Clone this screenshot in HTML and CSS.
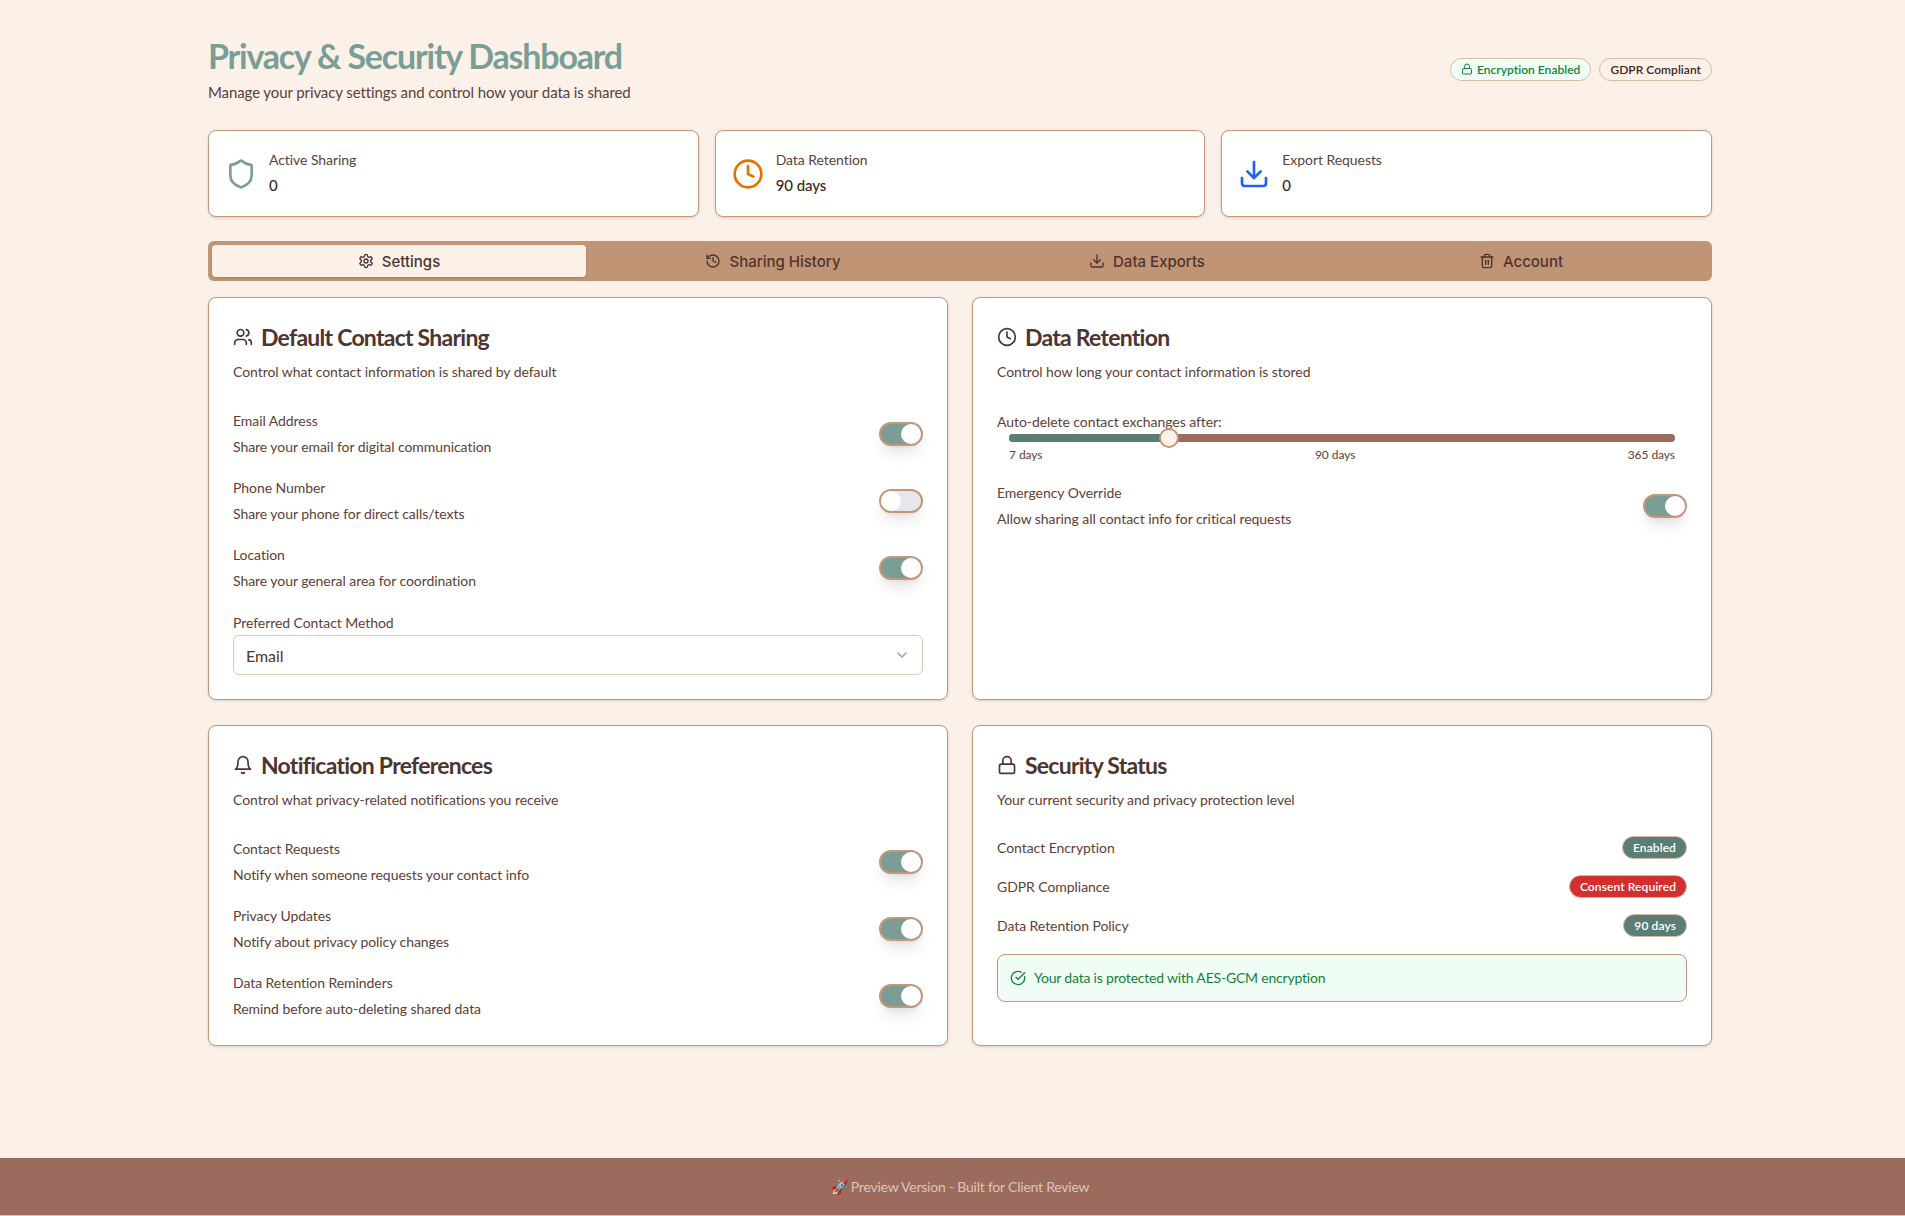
FILE: index.html
```html
<!DOCTYPE html>
<html lang="en">
<head>
    <meta charset="UTF-8">
    <title>Privacy &amp; Security Dashboard</title>
    <link rel="stylesheet" href="styles.css">
</head>
<body>
    <main class="page">
        <header class="top">
            <div>
                <h1>Privacy &amp; Security Dashboard</h1>
                <p class="sub">Manage your privacy settings and control how your data is shared</p>
            </div>
            <div class="top-badges">
                <span class="pill pill-green">
                    <svg class="ico12" viewBox="0 0 24 24"><rect x="3" y="11" width="18" height="11" rx="2"/><path d="M7 11V7a5 5 0 0 1 10 0v4"/></svg>
                    Encryption Enabled
                </span>
                <span class="pill pill-plain">GDPR Compliant</span>
            </div>
        </header>

        <section class="stats">
            <div class="stat">
                <svg class="stat-ico c-sage" viewBox="0 0 24 24"><path d="M20 13c0 5-3.5 7.500-7.660 8.950a1 1 0 0 1-.67-.01C7.500 20.500 4 18 4 13V6a1 1 0 0 1 1-1c2 0 4.500-1.200 6.240-2.720a1.170 1.170 0 0 1 1.520 0C14.510 3.810 17 5 19 5a1 1 0 0 1 1 1z"/></svg>
                <div><div class="stat-label">Active Sharing</div><div class="stat-value">0</div></div>
            </div>
            <div class="stat">
                <svg class="stat-ico c-orange" viewBox="0 0 24 24"><circle cx="12" cy="12" r="10"/><polyline points="12 6 12 12 16 14"/></svg>
                <div><div class="stat-label">Data Retention</div><div class="stat-value">90 days</div></div>
            </div>
            <div class="stat">
                <svg class="stat-ico c-blue" viewBox="0 0 24 24"><path d="M21 15v4a2 2 0 0 1-2 2H5a2 2 0 0 1-2-2v-4"/><polyline points="7 10 12 15 17 10"/><line x1="12" y1="15" x2="12" y2="3"/></svg>
                <div><div class="stat-label">Export Requests</div><div class="stat-value">0</div></div>
            </div>
        </section>

        <nav class="tabs">
            <button class="tab active">
                <svg class="ico16" viewBox="0 0 24 24"><path d="M12.220 2h-.44a2 2 0 0 0-2 2v.18a2 2 0 0 1-1 1.730l-.43.25a2 2 0 0 1-2 0l-.15-.08a2 2 0 0 0-2.730.73l-.22.38a2 2 0 0 0 .73 2.730l.15.1a2 2 0 0 1 1 1.720v.510a2 2 0 0 1-1 1.740l-.15.09a2 2 0 0 0-.73 2.730l.22.38a2 2 0 0 0 2.730.73l.15-.08a2 2 0 0 1 2 0l.43.25a2 2 0 0 1 1 1.730V20a2 2 0 0 0 2 2h.44a2 2 0 0 0 2-2v-.18a2 2 0 0 1 1-1.730l.43-.25a2 2 0 0 1 2 0l.15.08a2 2 0 0 0 2.730-.73l.22-.39a2 2 0 0 0-.73-2.730l-.15-.08a2 2 0 0 1-1-1.740v-.5a2 2 0 0 1 1-1.740l.15-.09a2 2 0 0 0 .73-2.730l-.22-.38a2 2 0 0 0-2.730-.73l-.15.08a2 2 0 0 1-2 0l-.43-.25a2 2 0 0 1-1-1.730V4a2 2 0 0 0-2-2z"/><circle cx="12" cy="12" r="3"/></svg>
                Settings
            </button>
            <button class="tab">
                <svg class="ico16" viewBox="0 0 24 24"><path d="M3 12a9 9 0 1 0 9-9 9.750 9.750 0 0 0-6.740 2.740L3 8"/><path d="M3 3v5h5"/><path d="M12 7v5l4 2"/></svg>
                Sharing History
            </button>
            <button class="tab">
                <svg class="ico16" viewBox="0 0 24 24"><path d="M21 15v4a2 2 0 0 1-2 2H5a2 2 0 0 1-2-2v-4"/><polyline points="7 10 12 15 17 10"/><line x1="12" y1="15" x2="12" y2="3"/></svg>
                Data Exports
            </button>
            <button class="tab">
                <svg class="ico16" viewBox="0 0 24 24"><path d="M3 6h18"/><path d="M19 6v14c0 1-1 2-2 2H7c-1 0-2-1-2-2V6"/><path d="M8 6V4c0-1 1-2 2-2h4c1 0 2 1 2 2v2"/><line x1="10" y1="11" x2="10" y2="17"/><line x1="14" y1="11" x2="14" y2="17"/></svg>
                Account
            </button>
        </nav>

        <section class="grid">
            <article class="card">
                <h2><svg class="ico20" viewBox="0 0 24 24"><path d="M16 21v-2a4 4 0 0 0-4-4H6a4 4 0 0 0-4 4v2"/><circle cx="9" cy="7" r="4"/><path d="M22 21v-2a4 4 0 0 0-3-3.870"/><path d="M16 3.130a4 4 0 0 1 0 7.750"/></svg>Default Contact Sharing</h2>
                <p class="card-sub">Control what contact information is shared by default</p>
                <div class="rows">
                    <div class="row"><div><div class="row-title">Email Address</div><div class="row-desc">Share your email for digital communication</div></div><span class="switch on"></span></div>
                    <div class="row"><div><div class="row-title">Phone Number</div><div class="row-desc">Share your phone for direct calls/texts</div></div><span class="switch"></span></div>
                    <div class="row"><div><div class="row-title">Location</div><div class="row-desc">Share your general area for coordination</div></div><span class="switch on"></span></div>
                    <div class="field">
                        <div class="row-title">Preferred Contact Method</div>
                        <div class="select">Email<svg class="ico16 chev" viewBox="0 0 24 24"><path d="m6 9 6 6 6-6"/></svg></div>
                    </div>
                </div>
            </article>

            <article class="card">
                <h2><svg class="ico20" viewBox="0 0 24 24"><circle cx="12" cy="12" r="10"/><polyline points="12 6 12 12 16 14"/></svg>Data Retention</h2>
                <p class="card-sub">Control how long your contact information is stored</p>
                <div class="retention">
                    <div class="slider-block">
                        <div class="row-title slider-title">Auto-delete contact exchanges after:</div>
                        <div class="slider"><span class="slider-fill"></span><span class="slider-thumb"></span></div>
                        <div class="slider-ticks"><span>7 days</span><span>90 days</span><span>365 days</span></div>
                    </div>
                    <div class="row"><div><div class="row-title">Emergency Override</div><div class="row-desc">Allow sharing all contact info for critical requests</div></div><span class="switch on"></span></div>
                </div>
            </article>

            <article class="card">
                <h2><svg class="ico20" viewBox="0 0 24 24"><path d="M6 8a6 6 0 0 1 12 0c0 7 3 9 3 9H3s3-2 3-9"/><path d="M10.300 21a1.940 1.940 0 0 0 3.400 0"/></svg>Notification Preferences</h2>
                <p class="card-sub">Control what privacy-related notifications you receive</p>
                <div class="rows">
                    <div class="row"><div><div class="row-title">Contact Requests</div><div class="row-desc">Notify when someone requests your contact info</div></div><span class="switch on"></span></div>
                    <div class="row"><div><div class="row-title">Privacy Updates</div><div class="row-desc">Notify about privacy policy changes</div></div><span class="switch on"></span></div>
                    <div class="row"><div><div class="row-title">Data Retention Reminders</div><div class="row-desc">Remind before auto-deleting shared data</div></div><span class="switch on"></span></div>
                </div>
            </article>

            <article class="card">
                <h2><svg class="ico20" viewBox="0 0 24 24"><rect x="3" y="11" width="18" height="11" rx="2"/><path d="M7 11V7a5 5 0 0 1 10 0v4"/></svg>Security Status</h2>
                <p class="card-sub">Your current security and privacy protection level</p>
                <div class="status-list">
                    <div class="status"><span>Contact Encryption</span><span class="tag tag-teal">Enabled</span></div>
                    <div class="status"><span>GDPR Compliance</span><span class="tag tag-red">Consent Required</span></div>
                    <div class="status"><span>Data Retention Policy</span><span class="tag tag-teal">90 days</span></div>
                </div>
                <div class="notice">
                    <svg class="ico16" viewBox="0 0 24 24"><path d="M21.800 10A10 10 0 1 1 17 3.340"/><path d="m9 11 3 3L22 4"/></svg>
                    Your data is protected with AES-GCM encryption
                </div>
            </article>
        </section>
    </main>

    <footer class="footer">🚀 Preview Version - Built for Client Review</footer>
</body>
</html>
```

FILE: styles.css
```css
* {
    box-sizing: border-box;
}
html {
    overflow-x: hidden;
}
body {
    margin: 0;
    width: 1920px;
    min-height: 1216px;
    display: flex;
    flex-direction: column;
    background-color: #fbf1e9;
    color: #3e2723;
    font-family: "Lato", sans-serif;
    font-size: 14px;
    letter-spacing: -0.06px;
}
svg {
    fill: none;
    stroke: currentColor;
    stroke-width: 2;
    stroke-linecap: round;
    stroke-linejoin: round;
    flex-shrink: 0;
}
.ico12 { width: 12px; height: 12px; }
.ico16 { width: 16px; height: 16px; }
.ico20 { width: 20px; height: 20px; }

.page {
    width: 1536px;
    margin: 0 auto;
    padding: 36px 16px 32px;
    flex: 1;
}
.top {
    display: flex;
    justify-content: space-between;
    align-items: center;
    margin-bottom: 26px;
}
h1 {
    margin: 0;
    font-size: 34px;
    line-height: 40px;
    font-weight: 700;
    letter-spacing: -1.2px;
    color: #7a9e96;
}
.sub {
    margin: 4px 0 0;
    font-size: 15px;
    line-height: 24px;
    letter-spacing: -0.1px;
    color: #5d4037;
}
.top-badges {
    display: flex;
    gap: 8px;
    margin-top: -2px;
}
.pill {
    display: inline-flex;
    align-items: center;
    gap: 4px;
    height: 23px;
    padding: 0 10px;
    border-radius: 12px;
    font-size: 12px;
    font-weight: 600;
    letter-spacing: 0.03px;
    border: 1px solid #d9b9a3;
}
.pill-green {
    color: #15803d;
    background-color: #f0fdf4;
}

.stats {
    display: grid;
    grid-template-columns: repeat(3, 1fr);
    gap: 16px;
    margin-bottom: 24px;
}
.stat {
    display: flex;
    align-items: center;
    gap: 12px;
    height: 87px;
    padding: 0 16px;
    background-color: #fff;
    border: 1px solid #c4967a;
    border-radius: 8px;
    box-shadow: 0 1px 3px rgba(0, 0, 0, 0.15);
}
.stat-ico { width: 32px; height: 32px; }
.c-sage { color: #7a9e96; }
.c-orange { color: #e57200; }
.c-blue { color: #1d63f0; }
.stat-label {
    line-height: 20px;
    color: #5d4037;
}
.stat-value {
    margin-top: 3px;
    font-size: 15px;
    line-height: 24px;
    font-weight: 500;
}

.tabs {
    display: grid;
    grid-template-columns: repeat(4, 1fr);
    height: 40px;
    padding: 4px;
    margin-bottom: 16px;
    background-color: #c19475;
    border-radius: 6px;
}
.tab {
    display: flex;
    align-items: center;
    justify-content: center;
    gap: 8px;
    border: 0;
    background: none;
    border-radius: 4px;
    color: #4e342e;
    font-family: "Inter", sans-serif;
    font-size: 15px;
    font-weight: 500;
}
.tab.active {
    background-color: #fbf1e9;
    box-shadow: 0 1px 2px rgba(0, 0, 0, 0.15);
}

.grid {
    display: grid;
    grid-template-columns: 1fr 1fr;
    gap: 25px 24px;
}
.card {
    padding: 24px;
    background-color: #fff;
    border: 1px solid #c4967a;
    border-radius: 8px;
    box-shadow: 0 1px 3px rgba(0, 0, 0, 0.15);
}
h2 {
    display: flex;
    align-items: center;
    gap: 8px;
    margin: -1px 0 0;
    font-size: 23px;
    line-height: 32px;
    font-weight: 700;
    letter-spacing: -0.75px;
    color: #4e342e;
}
.card-sub {
    margin: 9px 0 27.5px;
    line-height: 20px;
    color: #5d4037;
}
.rows {
    display: flex;
    flex-direction: column;
    gap: 18px;
}
.row {
    display: flex;
    justify-content: space-between;
    align-items: center;
    min-height: 49px;
}
.row-title {
    line-height: 20px;
    color: #5d4037;
}
.row-desc {
    margin-top: 6px;
    line-height: 20px;
    color: #5d4037;
}
.switch {
    position: relative;
    width: 44px;
    height: 24px;
    background-color: #e5e7eb;
    border: 2px solid #c4967a;
    border-radius: 12px;
    box-shadow: 0 10px 15px -3px rgba(0, 0, 0, 0.1), 0 4px 6px -4px rgba(0, 0, 0, 0.1);
}
.switch::after {
    content: "";
    position: absolute;
    top: 0;
    left: 0;
    width: 20px;
    height: 20px;
    background-color: #fff;
    border-radius: 50%;
}
.switch.on {
    background-color: #7a9e96;
}
.switch.on::after {
    left: 20px;
}
.field {
    margin-top: 2.5px;
}
.select {
    display: flex;
    justify-content: space-between;
    align-items: center;
    height: 40px;
    margin-top: 2px;
    padding: 0 12px;
    background-color: #fff;
    border: 1px solid #e0c7b5;
    border-radius: 6px;
    font-size: 16px;
    color: #4e342e;
}
.chev {
    opacity: 0.5;
}
.retention {
    display: flex;
    flex-direction: column;
    gap: 19px;
    padding-top: 2px;
}
.slider-title {
    height: 20px;
}
.slider {
    position: relative;
    height: 8px;
    margin: 2px 12px 0;
    background-color: #9b6b5e;
    border-radius: 4px;
}
.slider-fill {
    display: block;
    height: 100%;
    width: 24%;
    background-color: #5a7d75;
    border-radius: 4px 0 0 4px;
}
.slider-thumb {
    position: absolute;
    top: -6px;
    left: 24%;
    width: 20px;
    height: 20px;
    margin-left: -10px;
    background-color: #fbf1e9;
    border: 2px solid #c4967a;
    border-radius: 50%;
}
.slider-ticks {
    display: flex;
    justify-content: space-between;
    margin: 5px 12px 0;
    font-size: 12px;
    line-height: 16px;
    color: #5d4037;
}
.status-list {
    display: flex;
    flex-direction: column;
    gap: 16px;
    margin-top: -2px;
    margin-bottom: 17px;
    color: #5d4037;
}
.status {
    display: flex;
    justify-content: space-between;
    align-items: center;
}
.tag {
    height: 23px;
    padding: 0 10px;
    display: inline-flex;
    align-items: center;
    border-radius: 12px;
    border: 1px solid #d9b9a3;
    font-size: 12px;
    font-weight: 600;
    letter-spacing: 0.1px;
    color: #fff;
}
.tag-teal { background-color: #5a7d75; }
.tag-red { background-color: #d32f2f; }
.notice {
    display: flex;
    align-items: center;
    gap: 8px;
    height: 48px;
    padding: 0 12px;
    background-color: #f0fdf4;
    border: 1px solid #c4967a;
    border-radius: 8px;
    color: #15803d;
    letter-spacing: -0.2px;
}
.footer {
    height: 58px;
    display: flex;
    align-items: center;
    justify-content: center;
    background-color: #9b6b5e;
    border-bottom: 1px solid #d9c3b8;
    color: #dcc4ba;
    letter-spacing: -0.22px;
}
```
